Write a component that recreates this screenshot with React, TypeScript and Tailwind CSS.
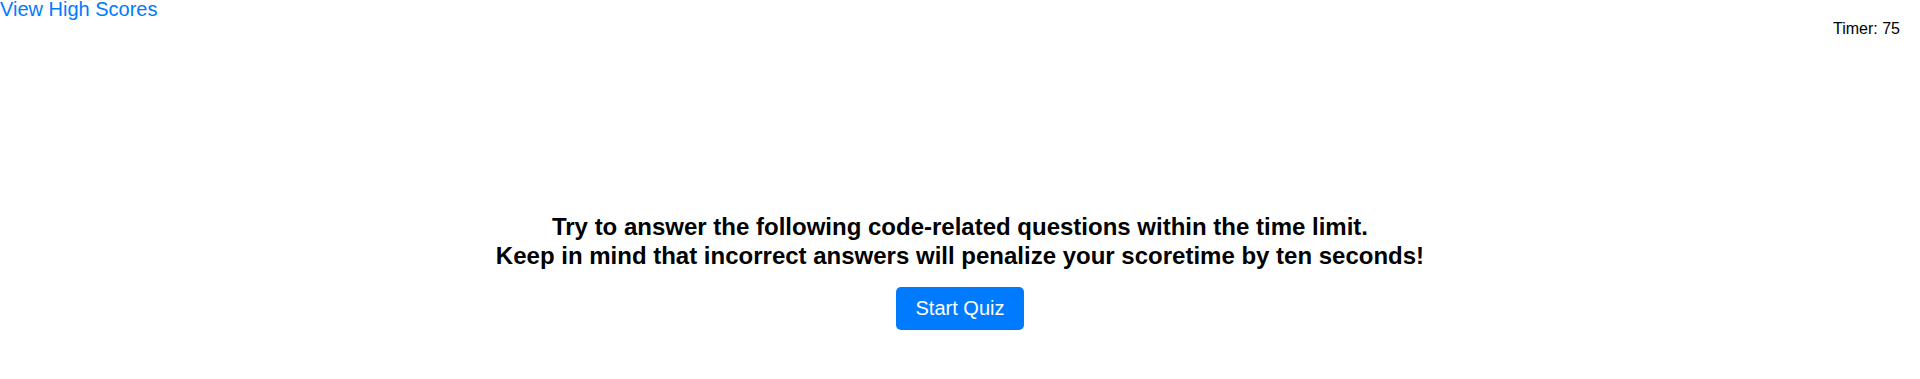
import React from 'react';

const App: React.FC = () => {
  return (
    <div className="min-h-[379px] w-full bg-white text-black" style={{ fontFamily: '"Liberation Sans", Arial, sans-serif' }}>
      <header className="flex items-start justify-between">
        <a href="#" className="text-[20px] leading-[18px] text-[#007bff]">
          View High Scores
        </a>
        <div className="mt-5 mr-5 text-[16px] leading-[18px]">Timer: 75</div>
      </header>
      <main className="flex flex-col items-center pt-[174px]">
        <h3 className="text-center text-[24px] font-bold leading-[29px]">
          Try to answer the following code-related questions within the time limit.
          <br />
          Keep in mind that incorrect answers will penalize your scoretime by ten seconds!
        </h3>
        <button className="mt-[17px] rounded-[5px] bg-[#007bff] px-5 py-[10px] text-[20px] leading-[23px] text-white">
          Start Quiz
        </button>
      </main>
    </div>
  );
};

export default App;
